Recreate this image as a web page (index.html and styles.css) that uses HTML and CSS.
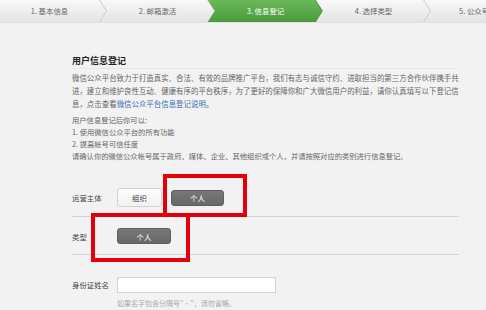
FILE: index.html
```html
<!DOCTYPE html>
<html lang="zh-CN">
  <head>
    <meta charset="UTF-8" />
    <title>用户信息登记</title>
    <link rel="stylesheet" href="styles.css">
  </head>
  <body>
    <div class="page">
      <div class="steps">
        <div class="step"><span>1. 基本信息</span></div>
        <div class="step"><span>2. 邮箱激活</span></div>
        <div class="step current"><span>3. 信息登记</span></div>
        <div class="step"><span>4. 选择类型</span></div>
        <div class="step"><span>5. 公众号信息</span></div>
      </div>

      <div class="main">
        <h2 class="title">用户信息登记</h2>
        <p class="intro">微信公众平台致力于打造真实、合法、有效的品牌推广平台，我们有志与诚信守约、进取担当的第三方合作伙伴携手共进，建立和维护良性互动、健康有序的平台秩序，为了更好的保障你和广大微信用户的利益，请你认真填写以下登记信息，点击查看<a href="#">微信公众平台信息登记说明</a>。</p>
        <div class="notes">
          <p>用户信息登记后你可以:</p>
          <p>1. 使用微信公众平台的所有功能</p>
          <p>2. 提高帐号可信任度</p>
          <p>请确认你的微信公众帐号属于政府、媒体、企业、其他组织或个人，并请按照对应的类别进行信息登记。</p>
        </div>

        <div class="form">
          <div class="row row-owner">
            <label class="label">运营主体</label>
            <div class="controls">
              <button class="btn">组织</button>
              <button class="btn btn-dark">个人</button>
            </div>
          </div>
          <div class="row row-type">
            <label class="label">类型</label>
            <div class="controls">
              <button class="btn btn-dark btn-wide">个人</button>
            </div>
          </div>
          <div class="field">
            <label class="label">身份证姓名</label>
            <div class="controls">
              <input type="text" class="text-input" />
              <p class="hint">如果名字包含分隔号"·"，请勿省略。</p>
            </div>
          </div>

          <!-- red marks over the screenshot -->
          <div class="mark mark-owner"></div>
          <div class="mark mark-type"></div>
        </div>
      </div>
    </div>
  </body>
</html>
```

FILE: styles.css
```css
body {
  margin: 0;
  background-color: #f2f2f2;
  font-family: "Noto Sans CJK SC", "Noto Sans", sans-serif;
  color: #555;
  overflow: hidden;
}
.page {
  width: 486px;
  height: 310px;
  overflow: hidden;
}
.steps {
  display: flex;
  height: 22px;
  margin-left: -1px;
  border-bottom: 1px solid #e2e2e2;
  background: linear-gradient(#f8f8f8, #e6e6e6);
}
.step {
  position: relative;
  flex: 0 0 115px;
  height: 22px;
  margin-left: -7px;
  background-color: #cdcdcd;
  clip-path: polygon(0 0, calc(100% - 7px) 0, 100% 50%, calc(100% - 7px) 100%, 0 100%, 7px 50%);
}
.step::before {
  content: "";
  position: absolute;
  top: 0;
  bottom: 0;
  left: 0;
  right: 1px;
  background: linear-gradient(#f8f8f8, #e4e4e4);
  clip-path: polygon(0 0, calc(100% - 7px) 0, 100% 50%, calc(100% - 7px) 100%, 0 100%, 7px 50%);
}
.step span {
  position: relative;
  display: block;
  text-align: center;
  font-size: 7.4px;
  line-height: 22px;
  color: #666;
}
.step.current {
  background-color: #4a943c;
}
.step.current::before {
  background: linear-gradient(#6ab858, #4b9a3d);
}
.step.current span {
  color: #fff;
}

.main {
  width: 387px;
  margin-left: 72px;
}
.title {
  margin: 31px 0 0;
  font-size: 9px;
  line-height: 14px;
  color: #222;
  border-bottom: 1px solid #e8e8e8;
}
.intro {
  margin: 2px 0 0;
  font-size: 7.44px;
  line-height: 13px;
  color: #666;
}
.intro a {
  color: #3a6eb5;
  text-decoration: none;
}
.notes {
  margin-top: 4px;
}
.notes p {
  margin: 0;
  font-size: 7.3px;
  line-height: 12px;
  color: #666;
  white-space: nowrap;
}

.form {
  position: relative;
}
.row {
  display: flex;
  align-items: center;
  border-bottom: 1px solid #d6d6d6;
}
.row-owner {
  padding: 26px 0 9px;
}
.row-type {
  padding: 11px 0 10px;
}
.label {
  flex: 0 0 45px;
  font-size: 7.4px;
  color: #444;
}
.controls {
  display: flex;
  align-items: center;
  gap: 9px;
}
.btn {
  height: 19px;
  width: 45px;
  padding: 0;
  border: 1px solid #d2d2d2;
  border-radius: 3px;
  background: linear-gradient(#ffffff, #f1f1f1);
  font-family: inherit;
  font-size: 7.4px;
  color: #444;
}
.btn-dark {
  width: 53px;
  height: 16px;
  border-color: #5e5e5e;
  background: linear-gradient(#777, #686868);
  color: #fff;
}
.btn-wide {
  width: 54px;
}
.field {
  display: flex;
  align-items: flex-start;
  padding-top: 22px;
}
.field .label {
  line-height: 16px;
}
.field .controls {
  display: block;
}
.text-input {
  display: block;
  width: 159px;
  height: 16px;
  box-sizing: border-box;
  margin: 0;
  border: 1px solid #d4d4d4;
  background-color: #fff;
}
.hint {
  margin: 5px 0 0;
  font-size: 7px;
  line-height: 10px;
  color: #aaa;
}

.mark {
  position: absolute;
  box-sizing: border-box;
  border: 4px solid #e3000b;
}
.mark-owner {
  left: 91px;
  top: 12px;
  width: 84px;
  height: 43px;
}
.mark-type {
  left: 19px;
  top: 51px;
  width: 99px;
  height: 49px;
}
```
